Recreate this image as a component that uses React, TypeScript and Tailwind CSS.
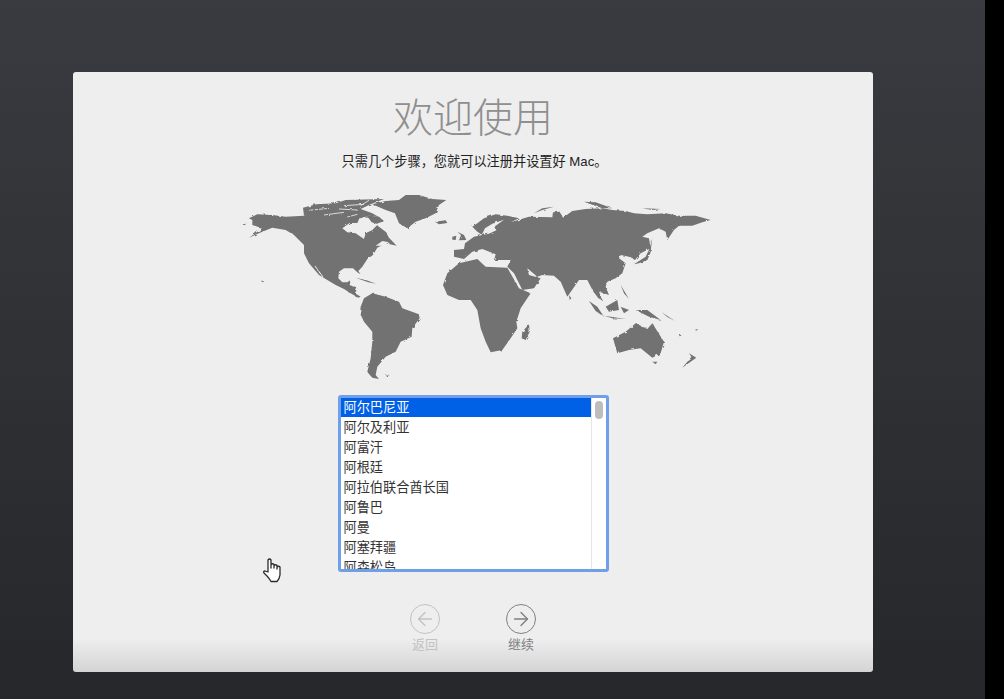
import React from 'react';
import { ArrowLeft, ArrowRight } from 'lucide-react';

const COUNTRIES = ['阿尔巴尼亚', '阿尔及利亚', '阿富汗', '阿根廷', '阿拉伯联合酋长国', '阿鲁巴', '阿曼', '阿塞拜疆', '阿森松岛'];

const LAND = '#727272';
const PANEL = '#eeeeee';

const WorldMap: React.FC = () => (
  <svg viewBox="230 185 490 200" className="w-[490px] h-[200px]">
    <defs>
      <filter id="coast" x="-5%" y="-5%" width="110%" height="110%">
        <feTurbulence type="fractalNoise" baseFrequency="0.22" numOctaves="2" seed="4" result="noise" />
        <feDisplacementMap in="SourceGraphic" in2="noise" scale="2.6" />
        <feGaussianBlur stdDeviation="0.3" />
      </filter>
    </defs>
    <g filter="url(#coast)">
      {/* americas */}
      <g transform="translate(230 185) scale(0.3333)" fill={LAND}>
        <path d="M60,100 L85,88 L130,90 L170,95 L225,92 L262,92 L300,96 L330,92 L345,96 L380,96 L395,100 L420,92 L450,95 L465,108 L440,118 L470,140 L480,158 L503,182 L470,175 L445,188 L432,210 L415,222 L400,245 L388,258 L395,268 L385,262 L372,250 L345,250 L330,260 L328,280 L340,292 L355,292 L365,285 L362,300 L385,310 L378,325 L395,335 L388,338 L365,325 L345,312 L320,300 L295,285 L270,270 L240,235 L225,205 L225,180 L195,150 L170,135 L130,128 L100,140 L60,158 L100,130 L70,120 L70,105 Z" />
        <path fill={PANEL} d="M340,130 L362,114 L385,114 L393,96 L418,98 L428,112 L447,118 L430,135 L410,145 L405,162 L395,155 L380,145 L355,142 Z" />
        <path fill={PANEL} d="M440,182 L460,168 L480,172 L462,182 Z" />
        <path fill="none" stroke={PANEL} strokeWidth="3" d="M258,243 L282,276" />
        <path d="M222,68 L262,58 L320,55 L350,45 L465,42 L425,58 L395,72 L430,85 L465,105 L450,96 L420,92 L395,100 L345,98 L300,98 L225,92 Z" />
        <path fill="none" stroke={PANEL} strokeWidth="2.5" d="M240,76 L300,70 M285,90 L345,82 M345,62 L405,58 M330,72 L385,75 M385,88 L355,96 M420,46 L395,62" />
        <path d="M430,58 L470,48 L510,45 L530,30 L570,30 L610,42 L652,45 L630,60 L620,85 L590,100 L560,110 L535,130 L510,115 L498,85 L470,75 Z" />
        <path d="M618,110 L650,106 L655,114 L630,118 Z" />
        <path d="M380,278 L410,285 L442,296 L418,292 Z" />
        <path d="M395,365 L405,340 L430,325 L470,335 L510,350 L520,370 L570,388 L572,400 L550,430 L548,455 L515,470 L500,500 L470,515 L445,545 L440,570 L450,582 L430,578 L415,560 L425,520 L430,470 L430,440 L405,410 L393,385 Z" />
        <path d="M468,568 L482,570 L472,574 Z M96,286 L106,290 L100,292 Z M40,118 L52,116 L46,121 Z" />
      </g>
      {/* europe, asia, africa, oceania */}
      <g transform="translate(440 185) scale(0.3333)" fill={LAND}>
        <path d="M45,195 L75,192 L78,175 L105,155 L130,150 L115,140 L100,125 L115,115 L135,100 L170,88 L205,92 L240,100 L215,112 L255,100 L270,95 L340,97 L342,82 L362,80 L372,98 L400,78 L440,72 L490,70 L520,75 L560,78 L585,85 L625,88 L680,85 L720,92 L770,92 L815,105 L790,112 L760,122 L720,122 L705,135 L685,165 L680,140 L660,130 L625,145 L610,155 L630,160 L635,190 L605,205 L588,225 L570,215 L545,210 L540,220 L560,235 L550,265 L530,280 L505,290 L500,305 L510,330 L495,325 L480,320 L490,345 L478,340 L462,318 L445,285 L420,285 L385,335 L365,290 L345,272 L310,270 L295,275 L265,250 L270,270 L305,280 L285,310 L250,315 L225,265 L205,245 L215,225 L165,225 L170,208 L130,192 L100,200 L75,222 L45,215 Z" />
        <path fill={PANEL} d="M128,150 L138,130 L160,116 L195,104 L168,124 L172,136 L150,146 Z" />
        <path d="M12,300 L25,265 L60,235 L115,222 L140,245 L205,248 L240,310 L275,325 L245,370 L232,410 L235,430 L215,460 L190,495 L155,502 L140,470 L125,430 L115,375 L95,345 L60,345 L25,330 Z" />
        <path d="M250,440 L270,418 L272,440 L260,465 L248,460 Z" />
        <path d="M55,140 L75,150 L82,165 L60,166 L66,150 Z" />
        <path d="M40,155 L52,152 L50,165 L40,164 Z" />
        <path d="M285,85 L310,70 L345,65 L310,75 Z" />
        <path d="M435,50 L470,52 L520,70 L490,70 Z" />
        <path d="M610,70 L665,72 L640,75 Z" />
        <path d="M585,238 L620,215 L632,190 L640,160 L634,205 L625,225 L600,235 Z" />
        <path d="M390,330 L397,340 L392,345 Z" />
        <path d="M450,348 L475,365 L495,395 L470,378 Z" />
        <path d="M495,392 L560,402 L520,400 Z" />
        <path d="M500,365 L535,345 L540,375 L510,380 Z" />
        <path d="M545,365 L570,375 L555,385 Z" />
        <path d="M545,300 L570,342 L555,325 Z" />
        <path d="M590,375 L625,375 L665,405 L630,395 Z" />
        <path d="M668,382 L708,408 L685,396 Z M720,448 L728,452 L722,454 Z M768,434 L778,432 L772,437 Z" />
        <path d="M522,460 L560,440 L590,415 L625,432 L640,415 L675,470 L665,505 L640,518 L605,490 L570,495 L535,505 Z" />
        <path d="M640,530 L655,530 L650,538 Z" />
        <path d="M750,505 L772,518 L755,530 L730,548 L745,530 L760,520 Z" />
      </g>
    </g>
  </svg>
);

const HandCursor: React.FC = () => (
  <svg viewBox="0 0 18 25" className="absolute left-[190px] top-[486px] w-[18px] h-[25px]">
    <path
      d="M5,14 L5,2 Q6.5,0 8,2 L8,10 L8,6.5 Q9.5,5 11,6.5 L11,10 L11,7.5 Q12.5,6 14,7.5 L14,11 L14,9 Q15.5,7.5 17,9 L17,17 Q16.5,21 14,23.5 L8,23.5 Q6,20 4,18 L1,15 Q0,13 2,13 Z"
      fill="#ffffff"
      stroke="#2a2a2a"
      strokeWidth="1.3"
      strokeLinejoin="round"
    />
  </svg>
);

const NavButton: React.FC<{ label: string, enabled: boolean, icon: React.ReactNode }> = ({ label, enabled, icon }) => (
  <div className={`flex flex-col items-center w-[60px] ${enabled ? 'text-[#808080]' : 'text-[#c2c2c2]'}`}>
    <div className="w-[30px] h-[30px] rounded-full border-[1.5px] border-current flex items-center justify-center">
      {icon}
    </div>
    <span className="text-[13px] leading-[18px] mt-[2px]">{label}</span>
  </div>
);

const App: React.FC = () => (
  <div className="w-[1004px] h-[699px] flex bg-black overflow-hidden font-['Liberation_Sans','Noto_Sans_CJK_SC',sans-serif]">
    <div className="w-[985px] h-full pt-[72px] pl-[73px] bg-gradient-to-b from-[#3a3b40] to-[#26272a]">
      <div className="relative w-[800px] h-[600px] rounded-[3px] flex flex-col items-center bg-gradient-to-b from-[#eeeeee] from-[94.5%] to-[#d4d4d4]">
        <h1 className="mt-[20px] text-[40px] leading-[52px] font-light text-[#8f8f8f]">欢迎使用</h1>
        <p className="mt-[8px] ml-[3px] text-[13.2px] leading-[20px] text-[#222222]">只需几个步骤，您就可以注册并设置好 Mac。</p>
        <div className="mt-[13px] ml-[2px]">
          <WorldMap />
        </div>
        <div className="mt-[10px] w-[271px] h-[177px] rounded-[3px] border-[3px] border-[#6f9fe8] bg-white flex overflow-hidden">
          <ul className="flex-1">
            {COUNTRIES.map((name, i) => (
              <li
                key={name}
                className={`pl-[3px] text-[13.2px] leading-[20px] ${i === 0 ? 'h-[19px] mb-[1px] bg-[#0060e6] text-white' : 'h-[20px] text-[#333333]'}`}
              >
                {name}
              </li>
            ))}
          </ul>
          <div className="w-[15px] border-l border-[#e6e6e6] pt-[3px] pl-[3px]">
            <div className="w-[8px] h-[18px] rounded-full bg-[#bdbdbd]" />
          </div>
        </div>
        <div className="mt-[32px] flex gap-[36px]">
          <NavButton label="返回" enabled={false} icon={<ArrowLeft size={22} strokeWidth={1.5} />} />
          <NavButton label="继续" enabled icon={<ArrowRight size={22} strokeWidth={1.5} />} />
        </div>
        <HandCursor />
      </div>
    </div>
  </div>
);

export default App;
